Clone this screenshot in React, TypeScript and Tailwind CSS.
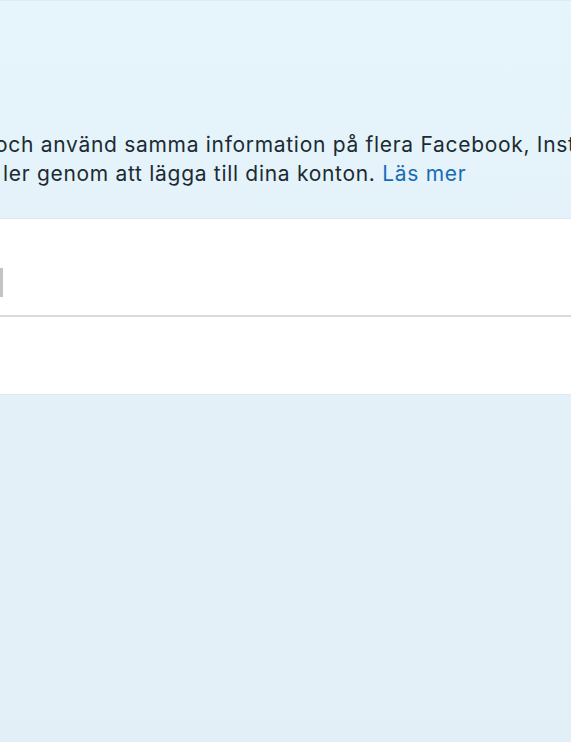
export default function App() {
  return (
    <div
      className="relative h-[742px] w-[571px] overflow-hidden bg-gradient-to-b from-[#e6f4fb] via-[#e4f1f8] to-[#e2eff6] text-[#1c2b33]"
      style={{ fontFamily: "Inter, 'Liberation Sans', sans-serif" }}
    >
      <div className="h-px w-full bg-[#dbeef2]" />

      {/* intro text, cropped on both sides */}
      <div className="h-[217px] pt-[129px] text-[21px] leading-[29px] tracking-[0.7px]">
        <p className="ml-[-5px] whitespace-nowrap">
          och använd samma information på flera Facebook, Instagram
        </p>
        <p className="ml-[3px] whitespace-nowrap">
          ler genom att lägga till dina konton.{" "}
          <a className="text-[#1a6bb5]">Läs mer</a>
        </p>
      </div>

      {/* card */}
      <div className="border-y border-[#dde9ef] bg-white">
        <div className="h-[96px] pt-[49px]">
          <div className="h-[29px] w-[3px] bg-[#c4c4c4]" />
        </div>
        <div className="h-[2px] bg-[#d6dbde]" />
        <div className="h-[77px]" />
      </div>
    </div>
  );
}
